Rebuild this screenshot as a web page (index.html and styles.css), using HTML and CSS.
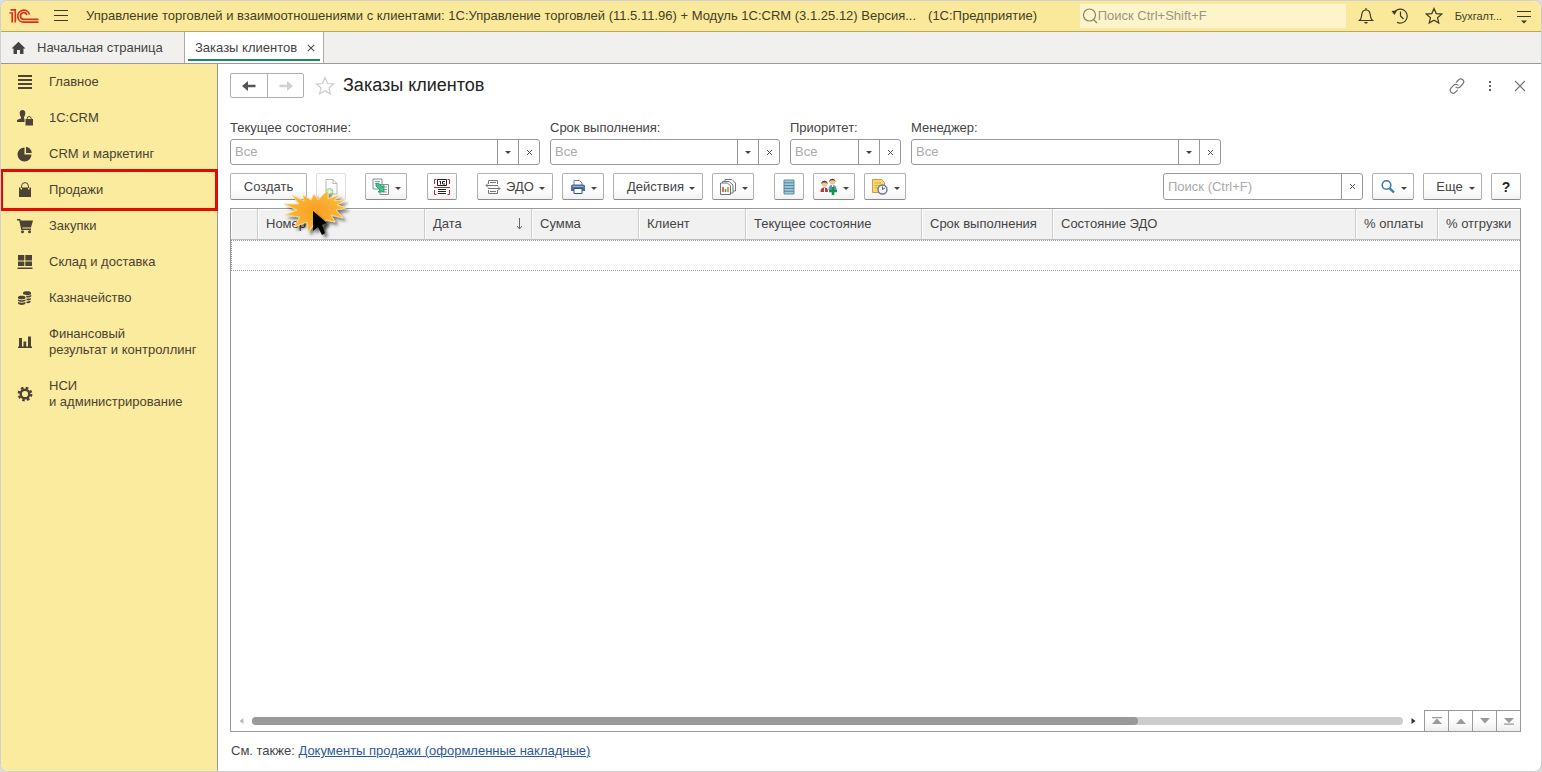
FILE: index.html
```html
<!DOCTYPE html>
<html lang="ru">
<head>
<meta charset="utf-8">
<title>Заказы клиентов</title>
<link rel="stylesheet" href="styles.css">
</head>
<body>
<div class="app">
  <header class="topbar">
    <svg class="logo" width="30" height="16" viewBox="0 0 30 16" fill="none" stroke="#d5331f" stroke-width="1.700">
      <path d="M0.500 5H3.200V14.500M1.500 1.800H6.300V14.500"/>
      <path d="M20.500 6.500A6 6 0 1 0 14.800 14.200H29.500"/>
      <path d="M17.900 7A3.300 3.300 0 1 0 14.800 11.300H29.500"/>
    </svg>
    <button class="icon-btn menu-btn" aria-label="Меню"><svg width="16" height="14" viewBox="0 0 16 14" stroke="#3f3921" stroke-width="1.200"><path d="M1 1.500H15M1 6.500H15M1 11.500H15"/></svg></button>
    <div class="app-title"><span>Управление торговлей и взаимоотношениями с клиентами: 1С:Управление торговлей (11.5.11.96) + Модуль 1С:CRM (3.1.25.12) Версия...</span><span>(1С:Предприятие)</span></div>
    <label class="global-search">
      <svg width="18" height="18" viewBox="0 0 18 18" fill="none" stroke="#8a8568" stroke-width="1.200"><circle cx="9.500" cy="8" r="6"/><path d="M13.500 12.500 17 16"/></svg>
      <input type="text" placeholder="Поиск Ctrl+Shift+F" aria-label="Глобальный поиск">
    </label>
    <div class="top-actions">
      <button class="icon-btn" aria-label="Уведомления"><svg width="18" height="18" viewBox="0 0 18 18" fill="none" stroke="#3f3921" stroke-width="1.200"><path d="M2.500 13.500C4.500 12 4.500 10 4.800 7.500 5.100 4.500 6.500 3 9 3s3.900 1.500 4.200 4.500C13.500 10 13.500 12 15.500 13.500ZM9 3V1"/><path d="M6.800 15H11.200L9 17Z" fill="#3f3921" stroke="none"/></svg></button>
      <button class="icon-btn" aria-label="История"><svg width="18" height="18" viewBox="0 0 18 18" fill="none" stroke="#3f3921" stroke-width="1.200"><path d="M3.200 5.500A7 7 0 1 1 6 15.300M9.500 4.500V9L12.500 12"/><path d="M0.500 4 6 3.500 3.500 8Z" fill="#3f3921" stroke="none"/></svg></button>
      <button class="icon-btn" aria-label="Избранное"><svg width="18" height="18" viewBox="0 0 18 18" fill="none" stroke="#3f3921" stroke-width="1.200"><path d="M9 1.500 11.200 6.600 16.700 7.100 12.500 10.700 13.800 16 9 13.200 4.200 16 5.500 10.700 1.300 7.100 6.800 6.600Z"/></svg></button>
      <button class="user-btn">Бухгалт...</button>
      <button class="icon-btn" aria-label="Сервис"><svg width="16" height="16" viewBox="0 0 16 16"><path d="M1 3.500H15M1 8.500H15" stroke="#3f3921" stroke-width="1.200"/><path d="M5 12.500H11L8 15.500Z" fill="#3f3921"/></svg></button>
    </div>
  </header>

  <nav class="tabs">
    <a class="tab home" href="#"><svg width="15" height="14" viewBox="0 0 15 14" fill="#444"><path d="M7.500 0.800 0.500 7.500H2.500V13H6V9H9V13H12.500V7.500H14.500Z"/></svg>Начальная страница</a>
    <div class="tab active"><a href="#">Заказы клиентов</a><button class="tab-close" aria-label="Закрыть вкладку"><svg width="8" height="8" viewBox="0 0 8 8" stroke="#555" stroke-width="1.200"><path d="M0.800 0.800 7.200 7.200M7.200 0.800 0.800 7.200"/></svg></button></div>
  </nav>

  <div class="body">
    <aside class="sidebar">
      <a class="side-item" href="#"><svg width="16" height="16" viewBox="0 0 16 16" stroke="#4c4334" stroke-width="2"><path d="M1 2H15M1 6H15M1 10H15M1 14H15"/></svg><span>Главное</span></a>
      <a class="side-item" href="#"><svg width="16" height="16" viewBox="0 0 16 16" fill="#4c4334"><path d="M5.500 0C7.500 0 8.500 1.300 8.300 3.500 8.200 5 7.500 6.500 7 7V8.500L7.500 9V12H0V10.500C0.500 9.200 2.500 9 4 8.500V7C3.300 6.300 2.700 5 2.700 3.500 2.600 1.300 3.500 0 5.500 0Z"/><path d="M8.500 9H16V15.500H8.500Z"/><path d="M10.200 9.500V8.500A2 2 0 0 1 14.200 8.500V9.500" fill="none" stroke="#4c4334"/></svg><span>1С:CRM</span></a>
      <a class="side-item" href="#"><svg width="16" height="16" viewBox="0 0 16 16" fill="#4c4334"><path d="M7.500 1.500V8.500H14.500A7 7 0 1 1 7.500 1.500Z"/><path d="M9 0.800A6.500 6.500 0 0 1 14.800 7H9Z"/></svg><span>CRM и маркетинг</span></a>
      <a class="side-item highlighted" href="#"><svg width="16" height="16" viewBox="0 0 16 16" fill="#4c4334"><path d="M2 5.500H3.500V7.500H5V5.500H11V7.500H12.500V5.500H14V15H2Z"/><path d="M4.600 6V4A3.400 3.400 0 0 1 11.400 4V6" fill="none" stroke="#4c4334"/></svg><span>Продажи</span></a>
      <a class="side-item" href="#"><svg width="16" height="16" viewBox="0 0 16 16" fill="#4c4334"><path d="M0 1H3.200L3.800 2.500H16L14 9.500H5.200L5.500 10.500H14V12H4.300L2.200 2.400H0Z"/><circle cx="5.500" cy="13.800" r="1.500"/><circle cx="12.500" cy="13.800" r="1.500"/></svg><span>Закупки</span></a>
      <a class="side-item" href="#"><svg width="16" height="16" viewBox="0 0 16 16" fill="#4c4334"><path d="M1 1H7.300V6.500H1ZM8.300 1H15V6.500H8.300ZM1 7.500H7.300V12H1ZM8.300 7.500H15V12H8.300ZM0.500 13.500H15.500V15H0.500Z"/></svg><span>Склад и доставка</span></a>
      <a class="side-item" href="#"><svg width="16" height="16" viewBox="0 0 16 16" fill="#4c4334"><path d="M6 2.500C6.500 0.800 13.500 0.800 14 2.500V4C13.500 5.300 8 5.300 6 4Z"/><path d="M9 5.800C11 6 13.500 5.700 14.300 4.800V6.200C13.500 7.400 11 7.700 9.500 7.400ZM9.500 8.600C11.500 8.800 13 8.500 13.700 7.800V9.400C12.500 10.500 11 10.500 9.500 10.300ZM9.500 11.400C11 11.500 12.500 11.300 13.500 10.600V12.300C12.500 13.200 11 13.300 9.500 13.100Z"/><path d="M1 7C1.500 5.300 8 5.300 8.500 7V8.300C7.500 9.600 2 9.600 1 8.300ZM1 9.400C3 10.500 6.500 10.500 8.500 9.400V10.800C7 12.200 2.500 12.200 1 10.800ZM1 12C3 13 6.500 13 8.500 12V13.600C7.500 15.400 2 15.400 1 13.600Z"/></svg><span>Казначейство</span></a>
      <a class="side-item" href="#"><svg width="16" height="16" viewBox="0 0 16 16" fill="#4c4334"><path d="M2 4H5V13H2ZM6.500 7.500H9.200V13H6.500ZM11 2.500H14V13H11ZM1 12.500H15V14H1Z"/></svg><span>Финансовый<br>результат и контроллинг</span></a>
      <a class="side-item" href="#"><svg width="16" height="16" viewBox="0 0 16 16" fill="none" stroke="#4c4334"><circle cx="8" cy="8" r="4.300" stroke-width="2.400"/><circle cx="8" cy="8" r="6.300" stroke-width="2.200" stroke-dasharray="2.600 2.350"/></svg><span>НСИ<br>и администрирование</span></a>
    </aside>

    <main class="main">
      <div class="page-head">
        <div class="nav-pair">
          <button aria-label="Назад"><svg width="16" height="12" viewBox="0 0 16 12"><path d="M7 1 1 6 7 11V7.200H14.500V4.800H7Z" fill="#555"/></svg></button>
          <button aria-label="Вперед" disabled><svg width="16" height="12" viewBox="0 0 16 12"><path d="M9 1 15 6 9 11V7.200H1.500V4.800H9Z" fill="#d0d0d0"/></svg></button>
        </div>
        <button class="icon-btn" aria-label="В избранное"><svg width="20" height="20" viewBox="0 0 20 20" fill="#fff" stroke="#ccc" stroke-width="1.200"><path d="M10 1.500 12.500 7.500 18.500 8 14 12 15.400 18 10 14.800 4.600 18 6 12 1.500 8 7.500 7.500Z"/></svg></button>
        <h1>Заказы клиентов</h1>
        <div class="head-actions">
          <button class="icon-btn" aria-label="Ссылка"><svg width="18" height="18" viewBox="0 0 18 18" fill="none" stroke="#777" stroke-width="1.200"><path d="M8 5.500 10.500 3C13.500 0 17.500 4 14.800 7L12 10C10.500 11.500 8.500 11 7.700 9.700M10.300 8.500C9.300 7 7 7 5.800 8.200L3 11.200C0.500 14.200 4.300 18 7.300 15.300L9.800 12.800"/></svg></button>
          <button class="icon-btn" aria-label="Еще"><svg width="4" height="14" viewBox="0 0 4 14" fill="#666"><path d="M1 2H3V4H1ZM1 6H3V8H1ZM1 10H3V12H1Z"/></svg></button>
          <button class="icon-btn" aria-label="Закрыть"><svg width="12" height="12" viewBox="0 0 12 12" stroke="#777" stroke-width="1.200"><path d="M1 1 11 11M11 1 1 11"/></svg></button>
        </div>
      </div>

      <div class="filters">
        <div class="filter wide"><label for="f1">Текущее состояние:</label><div class="field"><input id="f1" type="text" placeholder="Все"><button aria-label="Выбрать"><i class="caret"></i></button><button aria-label="Очистить"><svg class="x" viewBox="0 0 7 7"><path d="M1 1 6 6M6 1 1 6"/></svg></button></div></div>
        <div class="filter medium"><label for="f2">Срок выполнения:</label><div class="field"><input id="f2" type="text" placeholder="Все"><button aria-label="Выбрать"><i class="caret"></i></button><button aria-label="Очистить"><svg class="x" viewBox="0 0 7 7"><path d="M1 1 6 6M6 1 1 6"/></svg></button></div></div>
        <div class="filter narrow"><label for="f3">Приоритет:</label><div class="field"><input id="f3" type="text" placeholder="Все"><button aria-label="Выбрать"><i class="caret"></i></button><button aria-label="Очистить"><svg class="x" viewBox="0 0 7 7"><path d="M1 1 6 6M6 1 1 6"/></svg></button></div></div>
        <div class="filter wide"><label for="f4">Менеджер:</label><div class="field"><input id="f4" type="text" placeholder="Все"><button aria-label="Выбрать"><i class="caret"></i></button><button aria-label="Очистить"><svg class="x" viewBox="0 0 7 7"><path d="M1 1 6 6M6 1 1 6"/></svg></button></div></div>
      </div>

      <div class="toolbar">
        <div class="group first">
          <button class="btn create">Создать</button>
          <button class="btn square faded" aria-label="Скопировать"><svg width="16" height="18" viewBox="0 0 16 18" fill="none"><path d="M3 1.500H10L14 5.500V16H3Z" stroke="#b4bab7"/><path d="M10 1.500V5.500H14" stroke="#b4bab7"/><circle cx="6.500" cy="14" r="4" fill="#a5e0b0"/><path d="M6.500 11.500V16.500M4 14H9" stroke="#fff" stroke-width="1.500"/></svg></button>
          <svg class="click-burst" width="76" height="56" viewBox="0 0 76 56">
            <defs><radialGradient id="burst"><stop offset="0" stop-color="#f79f24"/><stop offset="1" stop-color="#fcb93a"/></radialGradient><filter id="soft" x="-20%" y="-20%" width="150%" height="150%"><feDropShadow dx="3" dy="3" stdDeviation="1.500" flood-opacity="0.500"/></filter></defs>
            <path filter="url(#soft)" d="M20 5 28 10 31 4 35 10 45 0 45 9 56 5 51 11 62 10 54 15 63 18 53 20 60 28 48 25 52 32 43 30 38 40 33 32 25 42 24 32 11 37 17 27 2 25 14 20 1 14 16 14 9 5 21 11Z" fill="url(#burst)" stroke="#fbe08a" stroke-width="0.800"/>
            <path filter="url(#soft)" d="M30 21V41L35 37 39 45 42 43 39 35 44 33Z" fill="#050505"/>
          </svg>
        </div>
        <div class="group">
          <button class="btn drop" aria-label="Создать на основании"><svg width="18" height="18" viewBox="0 0 18 18"><path d="M1 1H10V11H1ZM8 6.500H16.500V16.500H8Z" fill="#fff" stroke="#7c918a"/><path d="M3 3.500H8M3 5.500H5M12 9H15M12 11.500H15M12 14H15" stroke="#8ea29a"/><path d="M4 5.500 6.500 5 10 9 12 7.500V14H6L8 12 4 8Z" fill="#3bc68a" stroke="#1c9260" stroke-width="0.800"/></svg><i class="caret"></i></button>
        </div>
        <div class="group">
          <button class="btn square" aria-label="Штрихкод"><svg width="18" height="18" viewBox="0 0 18 18" fill="none"><path d="M3.500 1.500H1.500V6M1.500 12V16.500H3.500M14.500 1.500H16.500V6M16.500 12V16.500H14.500M1 9.500H17" stroke="#c22a2a"/><path d="M4.500 1.500H13.500V7.500H4.500ZM5 11.500H13M5 13.500H13M5 15.500H13" stroke="#222"/><path d="M6.500 4 7.500 3V6.500M12 3.500H9.500V6H12" stroke="#222"/></svg></button>
        </div>
        <div class="group">
          <button class="btn edo"><svg width="16" height="16" viewBox="0 0 16 16" fill="none" stroke="#777"><path d="M3.500 5V1.500H12.500V5M3.500 11V14.500H12.500V11M5 3.500H11M1 6.500H13M3 9.500H15M5 12.500H11"/><path d="M3 4.500 1 6.500 3 8.500M13 7.500 15 9.500 13 11.500"/></svg><span>ЭДО</span><i class="caret"></i></button>
          <button class="btn drop" aria-label="Печать"><svg width="16" height="16" viewBox="0 0 16 16"><path d="M4 6V1.500H9.500L12 4V6" fill="#fff" stroke="#6b7d95"/><path d="M1 7Q1 5.500 3 5.500H13Q15 5.500 15 7V12H1Z" fill="#4b6d9d"/><path d="M2.500 7.500H13.500" stroke="#9bb3cf"/><path d="M4 9.500H12V14.500H4Z" fill="#fff" stroke="#39557f"/></svg><i class="caret"></i></button>
          <button class="btn actions"><span>Действия</span><i class="caret"></i></button>
          <button class="btn drop" aria-label="Отчеты"><svg width="18" height="18" viewBox="0 0 18 18"><path d="M6 1.500H13L16.500 5V13H6Z" fill="#fff" stroke="#6f7881"/><path d="M3.500 3.500H10L14 7V15H3.500Z" fill="#fff" stroke="#6f7881"/><path d="M1.500 5H8.500L11.500 8V16.500H1.500Z" fill="#fff" stroke="#6f7881"/><path d="M4 9V14" stroke="#d24a2e" stroke-width="1.600"/><path d="M6.500 11V14" stroke="#3f9f52" stroke-width="1.600"/><path d="M9 9V14" stroke="#d08a2e" stroke-width="1.600"/></svg><i class="caret"></i></button>
        </div>
        <div class="group">
          <button class="btn square" aria-label="Список"><svg width="12" height="16" viewBox="0 0 12 16"><path d="M1 1H11V15H1Z" fill="#9ecbdc" stroke="#64899b"/><path d="M1 3.800H11M1 6.600H11M1 9.400H11M1 12.200H11" stroke="#4f7f96"/></svg></button>
          <button class="btn drop" aria-label="Клиенты"><svg width="18" height="18" viewBox="0 0 18 18"><path d="M0.500 14C0.500 10.500 2 9.500 4.500 9.500S8 10.500 8 14Z" fill="#b93c45"/><path d="M8.500 12C8.500 8 10 7 12.500 7S16.500 8 16.500 11V12Z" fill="#5a9ac2"/><circle cx="4.500" cy="6" r="2.800" fill="#f1c58e"/><circle cx="12.300" cy="4" r="2.800" fill="#f1c58e"/><path d="M1.300 6C1 1.500 8 1.500 7.700 6L6 4.500H3ZM9.200 4C9-.5 15.700-.5 15.500 4L14 2.300H11Z" fill="#5b391f"/><path d="M4.500 10V14M12.500 7V10" stroke="#fff"/><path d="M9 13H17M13 9V17" stroke="#169345" stroke-width="2.600"/></svg><i class="caret"></i></button>
          <button class="btn drop" aria-label="Напоминания"><svg width="18" height="18" viewBox="0 0 18 18"><path d="M1.500 1.500H10.500L13.500 4.500V14.500H1.500Z" fill="#f6d771" stroke="#c7a23c"/><path d="M3.500 5H10M3.500 7.500H9M3.500 10H7" stroke="#d1ae4b"/><circle cx="11.500" cy="11.500" r="4.500" fill="#f4f7fb" stroke="#6d7690" stroke-width="1.400"/><path d="M11.500 8.500V11.500L14 10" fill="none" stroke="#4a618c"/></svg><i class="caret"></i></button>
        </div>
        <div class="group right">
          <div class="field search"><input type="text" placeholder="Поиск (Ctrl+F)" aria-label="Поиск"><button aria-label="Очистить"><svg class="x" viewBox="0 0 7 7"><path d="M1 1 6 6M6 1 1 6"/></svg></button></div>
          <button class="btn drop" aria-label="Найти"><svg width="16" height="16" viewBox="0 0 16 16" fill="none" stroke="#3a79a8"><circle cx="6.500" cy="6" r="4.300" stroke-width="1.600"/><path d="M9.700 9.300 14 13.500" stroke-width="2.400"/></svg><i class="caret"></i></button>
          <button class="btn more"><span>Еще</span><i class="caret"></i></button>
          <button class="btn square help">?</button>
        </div>
      </div>

      <section class="grid">
        <table>
          <colgroup><col class="c-mark"><col class="c-num"><col class="c-std"><col class="c-std"><col class="c-std"><col class="c-state"><col class="c-term"><col><col class="c-pct"><col class="c-pct"></colgroup>
          <thead><tr><th></th><th>Номер</th><th><span class="sorted">Дата<svg width="7" height="12" viewBox="0 0 7 12" fill="none" stroke="#666"><path d="M3.500 0V11M1 8 3.500 11 6 8"/></svg></span></th><th>Сумма</th><th>Клиент</th><th>Текущее состояние</th><th>Срок выполнения</th><th>Состояние ЭДО</th><th>% оплаты</th><th>% отгрузки</th></tr></thead>
          <tbody><tr><td colspan="10"></td></tr></tbody>
        </table>
        <div class="grid-foot">
          <svg class="arrow" width="5" height="8" viewBox="0 0 5 8" fill="#bbb"><path d="M4.500 1V7L0.500 4Z"/></svg>
          <div class="track"><div class="thumb"></div></div>
          <svg class="arrow" width="5" height="8" viewBox="0 0 5 8" fill="#333"><path d="M0.500 1V7L4.500 4Z"/></svg>
          <div class="pager">
            <button aria-label="В начало"><svg width="12" height="8" viewBox="0 0 12 8" fill="#999"><path d="M1 0H11V1.200H1ZM6 1.500 11 7H1Z"/></svg></button>
            <button aria-label="Вверх"><svg width="12" height="8" viewBox="0 0 12 8" fill="#999"><path d="M6 1.500 11 7H1Z"/></svg></button>
            <button aria-label="Вниз"><svg width="12" height="8" viewBox="0 0 12 8" fill="#999"><path d="M6 6.500 11 1H1Z"/></svg></button>
            <button aria-label="В конец"><svg width="12" height="8" viewBox="0 0 12 8" fill="#999"><path d="M6 6 11 1H1ZM1 6.500H11V7.700H1Z"/></svg></button>
          </div>
        </div>
      </section>
      <p class="see-also">См. также: <a href="#">Документы продажи (оформленные накладные)</a></p>
    </main>
  </div>
</div>
</body>
</html>
```
FILE: styles.css
```css
* { box-sizing: border-box; }
body { margin: 0; background: #dcdcdc; color: #444; font: 13px/16px "Liberation Sans", Arial, sans-serif; }
button, input { font: inherit; color: inherit; }
button { margin: 0; padding: 0; border: 0; background: none; display: inline-flex; align-items: center; justify-content: center; }
a { color: inherit; text-decoration: none; }
svg { display: block; flex: none; }
input { min-width: 0; border: 0; outline: 0; background: none; padding: 0; }
input::placeholder { color: #aaa; opacity: 1; }

.app { display: flex; flex-direction: column; height: 100vh; background: #fff; border: 1px solid #d0d0d0; border-radius: 8px; overflow: hidden; }

.topbar { display: flex; align-items: center; flex: none; height: 31px; padding: 0 9px 0 8px; background: #fae99b; border-bottom: 1px solid #b5a664; color: #443d22; }
.menu-btn { margin-left: 14px; }
.app-title { display: flex; gap: 12px; flex: 1; min-width: 0; margin-left: 17px; white-space: nowrap; overflow: hidden; }
.global-search { display: flex; align-items: center; flex: none; width: 266px; height: 24px; background: #fdf4cc; }
.global-search input { flex: 1; }
.global-search input::placeholder { color: #9a957b; }
.top-actions { display: flex; align-items: center; margin-left: 11px; gap: 16px; }
.user-btn { font-size: 11px; margin: 0 -2px 0 -4px; }

.tabs { display: flex; flex: none; height: 32px; background: #f1f0ef; border-bottom: 1px solid #999; }
.tab { display: flex; align-items: center; }
.tab.home { gap: 11px; width: 184px; padding-left: 10px; border-right: 1px solid #aaa; }
.tab.active { gap: 10px; padding: 0 8px 0 10px; background: #fff; border-right: 1px solid #aaa; position: relative; }
.tab.active::after { content: ""; position: absolute; left: 3px; right: 3px; bottom: 2px; height: 2px; background: #1f8a5b; }

.body { display: flex; flex: 1; min-height: 0; }
.sidebar { flex: none; width: 217px; background: #fbeb9f; border-right: 1px solid #999; color: #4a4230; }
.side-item { display: flex; align-items: center; gap: 16px; padding: 10px 0 10px 16px; position: relative; }
.side-item.highlighted::after { content: ""; position: absolute; inset: -3px -1px -3px -1px; border: 3px solid #e20c04; }

.main { display: flex; flex-direction: column; flex: 1; min-width: 0; padding: 9px 20px 12px 12px; }
.page-head { display: flex; align-items: center; height: 25px; }
.nav-pair { display: flex; height: 25px; border: 1px solid #b0b0b0; border-radius: 2px; margin-right: 11px; }
.nav-pair button { width: 36px; }
.nav-pair button + button { border-left: 1px solid #b0b0b0; }
h1 { margin: 0 0 2px 8px; font-size: 18px; line-height: 22px; font-weight: 400; color: #222; }
.head-actions { display: flex; align-items: center; gap: 22px; margin-left: auto; margin-right: -5px; }

.filters { display: flex; gap: 10px; margin-top: 22px; }
.filter { display: flex; flex-direction: column; gap: 3px; }
.filter.wide { width: 310px; }
.filter.medium { width: 230px; }
.filter.narrow { width: 111px; }
.field { display: flex; height: 26px; border: 1px solid #999; border-radius: 3px; background: #fff; }
.field input { flex: 1; padding-left: 4px; }
.field button { width: 21px; border-left: 1px solid #999; }
.x { width: 7px; height: 7px; fill: none; stroke: #555; stroke-width: 1; }
.caret { width: 0; height: 0; border: 3px solid transparent; border-top-color: #444; border-bottom-width: 0; }

.toolbar { display: flex; gap: 20px; margin-top: 8px; }
.group { display: flex; gap: 9px; position: relative; }
.group.first { margin-right: -1px; }
.group.right { margin-left: auto; }
.btn { height: 27px; border: 1px solid #b0b0b0; border-bottom-color: #8a8a8a; border-radius: 2px; background: linear-gradient(#fff 60%, #f2f2f2); }
.btn .caret { margin-top: 3px; }
.create { width: 77px; }
.square { width: 30px; }
.drop { width: 42px; gap: 5px; }
.edo { width: 76px; gap: 5px; }
.actions { width: 90px; gap: 5px; padding-left: 6px; }
.more { width: 59px; gap: 6px; padding-left: 6px; }
.faded { border-color: #ddd; }
.help { font-size: 14px; font-weight: 700; color: #222; }
.search { width: 200px; height: 27px; }
.click-burst { position: absolute; left: 53px; top: 17px; z-index: 2; }

.grid { display: flex; flex-direction: column; flex: 1; min-height: 0; margin-top: 8px; border: 1px solid #999; }
table { width: 100%; table-layout: fixed; border-collapse: separate; border-spacing: 0; }
th { height: 31px; padding: 0 8px; text-align: left; font-weight: 400; white-space: nowrap; background: #f2f1f2; border-right: 1px solid #ccc; border-bottom: 1px solid #bbb; box-shadow: inset 1px 1px #fff; }
th:last-child { border-right: 0; }
td { height: 31px; padding: 0; border: 1px dotted #999; border-width: 1px 0 1px 1px; }
.sorted { display: flex; align-items: center; justify-content: space-between; }
.c-mark { width: 27px; }
.c-num { width: 167px; }
.c-std { width: 107px; }
.c-state { width: 176px; }
.c-term { width: 131px; }
.c-pct { width: 82px; }
.grid-foot { display: flex; align-items: center; gap: 8px; height: 21px; margin-top: auto; padding-left: 8px; }
.track { flex: 1; height: 8px; border-radius: 4px; background: #ccc; }
.thumb { width: 77%; height: 8px; border-radius: 4px; background: #999; }
.pager { display: flex; height: 21px; border-top: 1px solid #999; }
.pager button { width: 24px; border-left: 1px solid #999; background: linear-gradient(#fff 40%, #eee); }
.see-also { margin: 11px 0 0 1px; }
.see-also a { color: #2c5a96; text-decoration: underline; }
```
